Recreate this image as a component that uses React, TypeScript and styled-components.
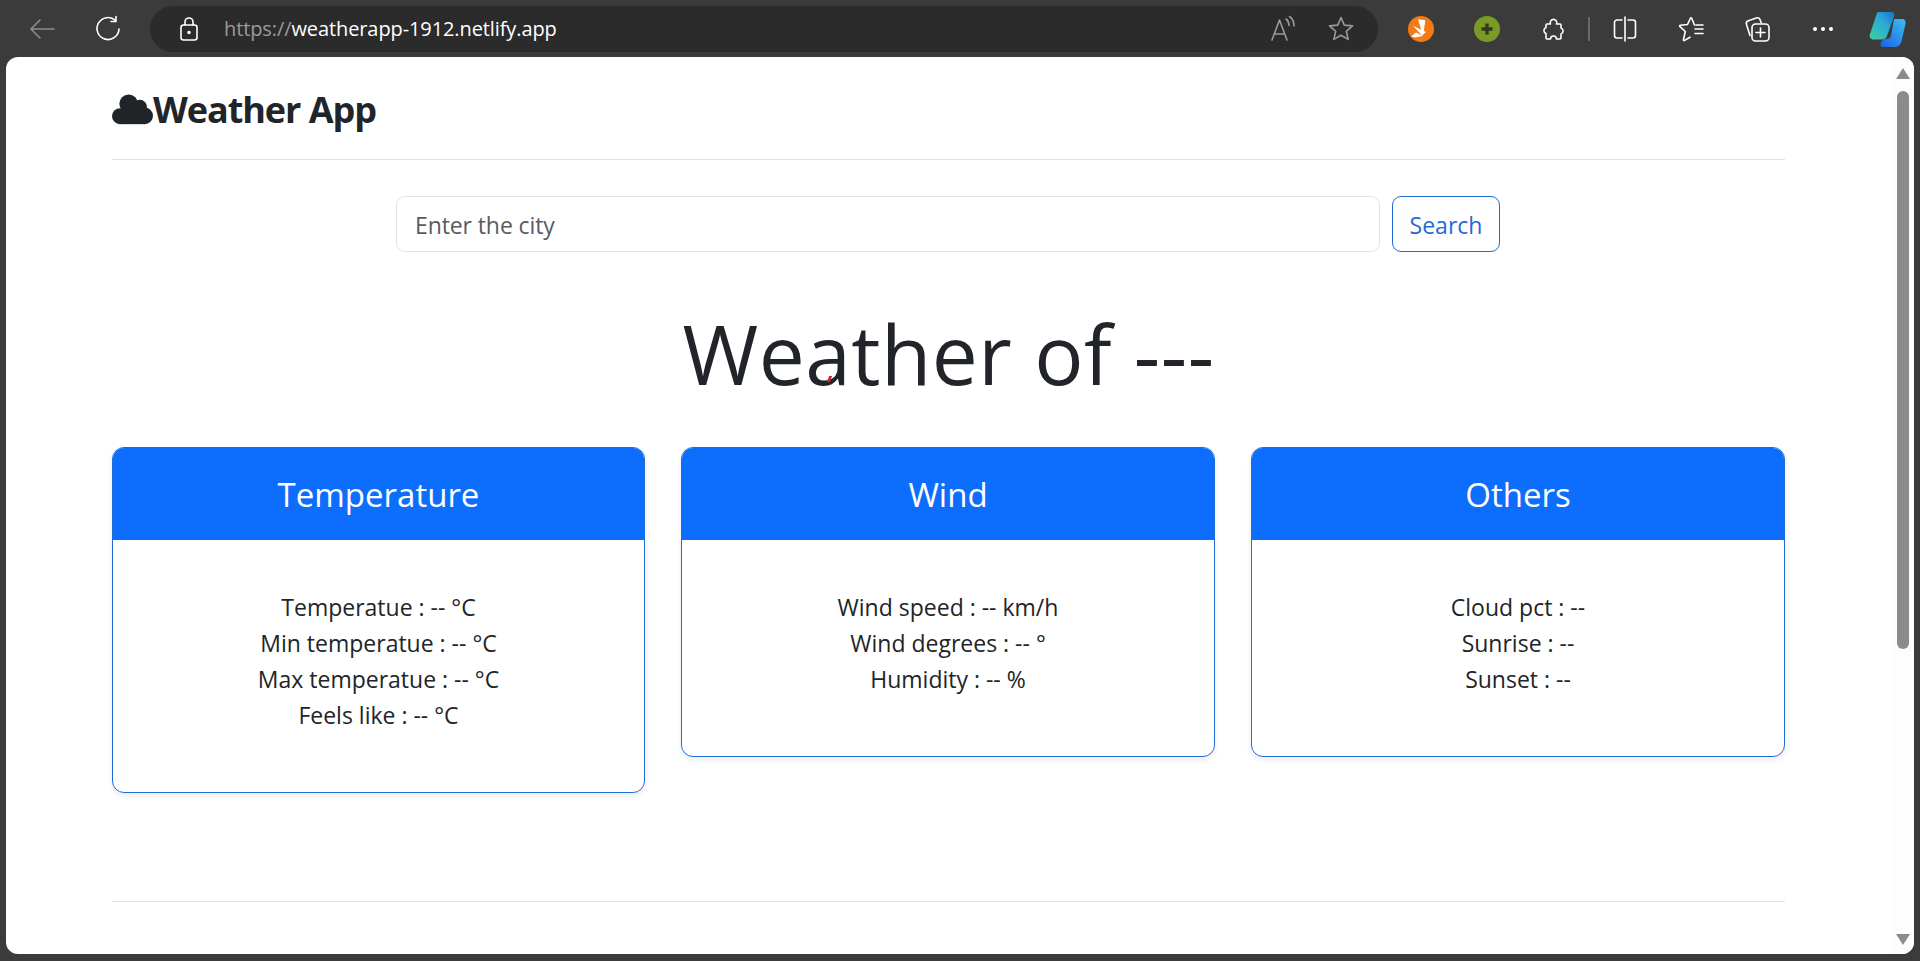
import { FC, ReactNode } from 'react';
import styled, { createGlobalStyle } from 'styled-components';

interface WeatherCard {
  title: string;
  rows: string[];
}

const cards: WeatherCard[] = [
  {
    title: 'Temperature',
    rows: ['Temperatue : -- °C', 'Min temperatue : -- °C', 'Max temperatue : -- °C', 'Feels like : -- °C'],
  },
  { title: 'Wind', rows: ['Wind speed : -- km/h', 'Wind degrees : -- °', 'Humidity : -- %'] },
  { title: 'Others', rows: ['Cloud pct : --', 'Sunrise : --', 'Sunset : --'] },
];

const Icon: FC<{ size?: number; children: ReactNode }> = ({ size = 28, children }) => (
  <svg width={size} height={size} viewBox="0 0 28 28" fill="none" stroke="currentColor" strokeWidth="1.6" strokeLinecap="round" strokeLinejoin="round">
    {children}
  </svg>
);

const STAR = 'M14 2.5l3.300 7.600 8.200.8-6.200 5.400 1.900 8.100-7.200-4.200-7.200 4.200 1.900-8.100-6.200-5.400 8.200-.8z';

export default function App() {
  return (
    <>
      <GlobalStyle />
      <Window>
        <Toolbar>
          <ToolSlot $dim>
            <Icon>
              <path d="M26 14H3M12 5l-9 9 9 9" />
            </Icon>
          </ToolSlot>
          <ToolSlot>
            <Icon>
              <path d="M21.500 5.500A11 11 0 1 0 25 14M22 1.500v5h-5" />
            </Icon>
          </ToolSlot>
          <AddressBar>
            <LockSlot>
              <Icon>
                <rect x="6" y="10" width="16" height="15" rx="2.500" />
                <path d="M10 10V7a4 4 0 0 1 8 0v3" />
                <circle cx="14" cy="17.500" r="1" fill="currentColor" />
              </Icon>
            </LockSlot>
            <Url>
              <UrlScheme>https://</UrlScheme>weatherapp-1912.netlify.app
            </Url>
            <BarActions>
              <Icon>
                <path d="M3 25L10.500 5 18 25M5.500 19h10M17 4c2 1.400 3 3.700 3 6.500M20.500 1.500c3 2 4.500 5.500 4.500 9.500" />
              </Icon>
              <Icon>
                <path d={STAR} />
              </Icon>
            </BarActions>
          </AddressBar>
          <ToolSlot>
            <svg width="26" height="26" viewBox="0 0 26 26">
              <circle cx="13" cy="13" r="13" fill="#f47a14" />
              <path d="M10 3.300L17.300 4.300 16 14 14.500 18zM5 9.800L18 16 14 19.500zM3 20.500L8 16.500 15 20 7 21.500z" fill="#fff" />
            </svg>
          </ToolSlot>
          <ToolSlot>
            <svg width="26" height="26" viewBox="0 0 26 26">
              <circle cx="13" cy="13" r="13" fill="#7a9a26" />
              <path d="M13 7.500v11M7.500 13h11" stroke="#33381f" strokeWidth="3.400" />
            </svg>
          </ToolSlot>
          <ToolSlot>
            <Icon>
              <path d="M8 9h3.500a3.300 3.300 0 1 1 6 0H21a1 1 0 0 1 1 1v3a3.200 3.200 0 0 1 0 6v4a1 1 0 0 1-1 1h-3.500a3 3 0 0 0-6 0H8a1 1 0 0 1-1-1v-4.500a3.200 3.200 0 0 1 0-6V10a1 1 0 0 1 1-1z" />
            </Icon>
          </ToolSlot>
          <ToolDivider />
          <ToolSlot>
            <Icon>
              <path d="M11 5H6a2.500 2.500 0 0 0-2.500 2.500v13A2.500 2.500 0 0 0 6 23h5M17 5h5a2.500 2.500 0 0 1 2.500 2.500v13A2.500 2.500 0 0 1 22 23h-5M14 2v24" />
            </Icon>
          </ToolSlot>
          <ToolSlot>
            <Icon>
              <path d="M17.500 10L14.800 3.500c-.4-1-1.100-1-1.500 0L10.500 9.500 3.500 10.200c-1 .1-1.200.8-.5 1.500l5.300 4.800-1.800 8c-.2 1 .4 1.400 1.200.9l5.300-3.200M18 14h8M18 18.500h8M19 10h7" />
            </Icon>
          </ToolSlot>
          <ToolSlot>
            <Icon>
              <path d="M7 20.500L3.500 9.500a3 3 0 0 1 1.800-3.800l8-2.700a3 3 0 0 1 3.800 1.700l1.200 3.300" />
              <rect x="9" y="9" width="17" height="17" rx="3.500" />
              <path d="M17.500 13v9M13 17.500h9" />
            </Icon>
          </ToolSlot>
          <ToolSlot>
            <Dots />
          </ToolSlot>
          <CopilotSlot>
            <svg width="37" height="38" viewBox="0 0 37 38">
              <defs>
                <linearGradient id="copilotLeft" x1="0" y1="1" x2="1" y2="0">
                  <stop offset="0" stopColor="#3bd19a" />
                  <stop offset="0.6" stopColor="#2aa8d8" />
                  <stop offset="1" stopColor="#1473c4" />
                </linearGradient>
                <linearGradient id="copilotRight" x1="0" y1="1" x2="1" y2="0">
                  <stop offset="0" stopColor="#1b5fe0" />
                  <stop offset="1" stopColor="#3cc0f5" />
                </linearGradient>
              </defs>
              <path d="M10 2h12c3 0 4 2 3 4.500L18 26c-1 2.500-3 3.500-6 3.500H5C1.500 29.500 0 27 1 24L7 6c.7-2.500 1.500-4 3-4z" fill="url(#copilotLeft)" />
              <path d="M25 9h8c2.500 0 4 2 3.500 4.500l-4 18C31.500 35 29 37 26 37H14c-2.500 0-3-2.500-2-5l3-3 3 0c2 0 3-1 4-3.500z" fill="url(#copilotRight)" />
            </svg>
          </CopilotSlot>
        </Toolbar>

        <Viewport>
          <Page>
            <Container>
              <Header>
                <svg width="41" height="31" viewBox="0 0 123 92" fill="#212529">
                  <circle cx="24" cy="66" r="24" />
                  <circle cx="50" cy="29" r="28" />
                  <circle cx="84" cy="38" r="21" />
                  <circle cx="98" cy="65" r="25" />
                  <rect x="24" y="44" width="74" height="46" />
                </svg>
                <Brand>Weather App</Brand>
              </Header>

              <SearchForm>
                <SearchInput type="search" placeholder="Enter the city" aria-label="Search" />
                <SearchButton type="button">Search</SearchButton>
              </SearchForm>

              <Heading>
                Weather of ---
                <RedMark />
              </Heading>

              <CardGrid>
                {cards.map((card) => (
                  <Card key={card.title}>
                    <CardHeader>{card.title}</CardHeader>
                    <CardBody>
                      {card.rows.map((row) => (
                        <CardRow key={row}>{row}</CardRow>
                      ))}
                    </CardBody>
                  </Card>
                ))}
              </CardGrid>

              <Rule />
            </Container>
          </Page>
          <Scrollbar>
            <ArrowUp />
            <ScrollTrack>
              <ScrollThumb />
            </ScrollTrack>
            <ArrowDown />
          </Scrollbar>
        </Viewport>
      </Window>
    </>
  );
}

const FONT = `'Open Sans', 'Noto Sans', sans-serif`;

const GlobalStyle = createGlobalStyle`
  html, body {
    margin: 0;
    padding: 0;
    height: 961px;
    overflow: hidden;
    background: #3b3b3b;
    font-family: ${FONT};
    color: #212529;
  }
  * {
    box-sizing: border-box;
  }
`;

const Window = styled.div`
  width: 1920px;
  height: 961px;
  display: flex;
  flex-direction: column;
  background: #3b3b3b;
`;

const Toolbar = styled.div`
  height: 57px;
  flex: none;
  display: flex;
  align-items: center;
  padding: 0 0 0 9px;
`;

const ToolSlot = styled.div<{ $dim?: boolean }>`
  width: 66px;
  height: 46px;
  flex: none;
  display: flex;
  align-items: center;
  justify-content: center;
  color: ${(props): string => (props.$dim ? '#8c8c8c' : '#ffffff')};
`;

const CopilotSlot = styled(ToolSlot)`
  width: 60px;
  margin-left: 1px;
`;

const ToolDivider = styled.div`
  width: 2px;
  height: 24px;
  flex: none;
  margin: 0 2px;
  background: #6a6a6a;
`;

const AddressBar = styled.div`
  width: 1228px;
  height: 46px;
  flex: none;
  margin: 0 10px 0 9px;
  padding: 0 23px 0 25px;
  display: flex;
  align-items: center;
  border-radius: 23px;
  background: #2b2b2b;
  color: #ffffff;
`;

const LockSlot = styled.div`
  width: 49px;
  display: flex;
  color: #ffffff;
`;

const Url = styled.div`
  flex: 1;
  font-family: 'Open Sans', sans-serif;
  font-size: 20px;
  letter-spacing: -0.1px;
  color: #ffffff;
`;

const UrlScheme = styled.span`
  color: #9a9a9a;
`;

const BarActions = styled.div`
  display: flex;
  align-items: center;
  gap: 30px;
  color: #9a9a9a;
`;

const Dots = styled.span`
  width: 4px;
  height: 4px;
  border-radius: 50%;
  background: #ffffff;
  box-shadow: -8px 0 0 #ffffff, 8px 0 0 #ffffff;
`;

const Viewport = styled.div`
  width: 1908px;
  height: 897px;
  margin-left: 6px;
  display: flex;
  overflow: hidden;
  border-radius: 12px;
  background: #ffffff;
`;

const Page = styled.main`
  flex: 1;
  min-width: 0;
  overflow: hidden;
`;

const Container = styled.div`
  width: 1673px;
  margin-left: 106px;
`;

const Header = styled.header`
  height: 103px;
  display: flex;
  align-items: center;
  padding-top: 3px;
  border-bottom: 1px solid #dee2e6;
`;

const Brand = styled.span`
  font-size: 36px;
  font-weight: 700;
  letter-spacing: -1.05px;
`;

const SearchForm = styled.form`
  display: flex;
  gap: 12px;
  width: 1104px;
  margin: 36px 0 0 284px;
`;

const SearchInput = styled.input`
  flex: 1;
  min-width: 0;
  height: 56px;
  padding: 2px 18px 0;
  border: 1.5px solid #dee2e6;
  border-radius: 9px;
  font-family: ${FONT};
  font-size: 23px;
  letter-spacing: -0.1px;
  color: #212529;
  outline: none;

  &::placeholder {
    color: #595c5f;
    opacity: 1;
  }
`;

const SearchButton = styled.button`
  width: 108px;
  height: 56px;
  padding: 2px 0 0;
  border: 1.5px solid #1f6bd8;
  border-radius: 9px;
  background: #ffffff;
  font-family: ${FONT};
  font-size: 23px;
  color: #1f6bd8;
`;

const Heading = styled.h1`
  position: relative;
  width: fit-content;
  margin: 52px auto 45px;
  font-size: 82px;
  font-weight: 400;
  letter-spacing: 0.5px;
  line-height: 1.2;
  white-space: nowrap;
`;

const RedMark = styled.i`
  position: absolute;
  left: 146px;
  bottom: 20px;
  width: 3px;
  height: 6px;
  background: #d8202a;
  transform: skewX(-20deg);
`;

const CardGrid = styled.div`
  display: grid;
  grid-template-columns: 533px 534px 534px;
  column-gap: 36px;
  align-items: start;
`;

const Card = styled.section`
  border: 1.5px solid #1f6bd8;
  border-radius: 12px;
  overflow: hidden;
  box-shadow: 0 3px 6px rgba(0, 0, 0, 0.075);
  background: #ffffff;
`;

const CardHeader = styled.h2`
  height: 92px;
  margin: 0;
  display: flex;
  align-items: center;
  justify-content: center;
  background: #0d6efd;
  color: #ffffff;
  font-size: 33px;
  font-weight: 400;
`;

const CardBody = styled.ul`
  list-style: none;
  margin: 0;
  padding: 49px 24px 59px;
  text-align: center;
`;

const CardRow = styled.li`
  font-size: 23px;
  line-height: 36px;
`;

const Rule = styled.hr`
  margin: 108px 0 0;
  border: 0;
  border-top: 1px solid #dee2e6;
`;

const Scrollbar = styled.aside`
  width: 23px;
  flex: none;
  display: flex;
  flex-direction: column;
  align-items: center;
  padding: 11px 0 9px;
  background: #fdfdfd;
`;

const ArrowUp = styled.div`
  width: 0;
  height: 0;
  border-left: 7px solid transparent;
  border-right: 7px solid transparent;
  border-bottom: 11px solid #8b8b8b;
`;

const ArrowDown = styled(ArrowUp)`
  transform: rotate(180deg);
`;

const ScrollTrack = styled.div`
  flex: 1;
  width: 100%;
  display: flex;
  justify-content: center;
  padding-top: 12px;
`;

const ScrollThumb = styled.div`
  width: 12px;
  height: 558px;
  border-radius: 6px;
  background: #8b8b8b;
`;
